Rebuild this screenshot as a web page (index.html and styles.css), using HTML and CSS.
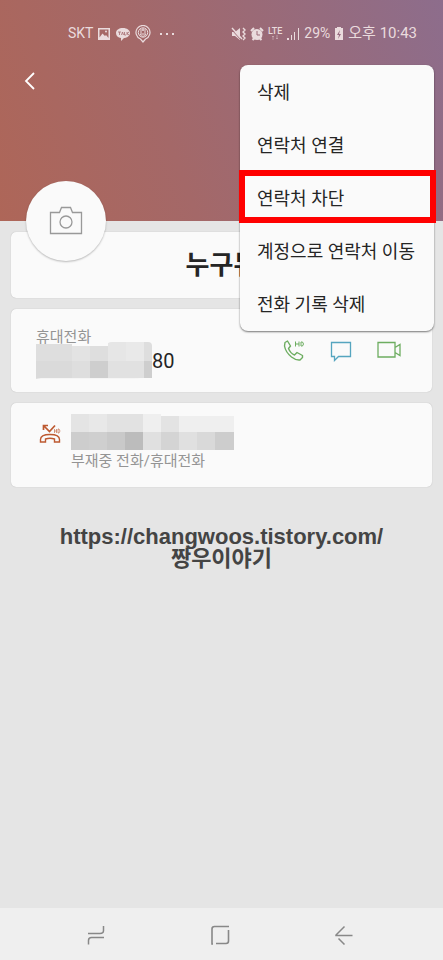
FILE: index.html
```html
<!DOCTYPE html>
<html lang="ko">
<head>
<meta charset="utf-8">
<meta name="viewport" content="width=device-width, initial-scale=1">
<title>연락처</title>
<link rel="stylesheet" href="styles.css">
</head>
<body>
<div class="screen">
  <header class="hero">
    <div class="status">
      <div class="status-group">
        <span class="small">SKT</span>
        <svg width="14" height="14" viewBox="0 0 14 14"><path fill="currentColor" fill-rule="evenodd" d="M1 1h12v12H1zM2.500 2.500v8l3-4 2.500 2.500 1-1 2.500 3V2.500z"/><circle cx="9" cy="4.600" r="1" fill="currentColor"/></svg>
        <svg width="16" height="14" viewBox="0 0 16 14"><path fill="currentColor" d="M8 1c4 0 7 2.200 7 5s-3 5-6 5l-3 3v-3C3 10.500 1 9 1 6s3-5 7-5z"/><path d="M3 5h3M4.500 5v3M6.500 8l1-3 1 3M9.500 5v3h1.500M12 5v3M14 5l-2 1.500 2 1.500" fill="none" stroke="#a46b70" stroke-width=".8"/></svg>
        <svg width="16" height="18" viewBox="0 0 16 18"><path fill="none" stroke="currentColor" stroke-width="1.200" d="M5.500 14a7 7 0 1 1 5 0L8 17z"/><circle cx="8" cy="7.500" r="4.700" fill="none" stroke="currentColor"/><path d="M5 5h6M5 7h2M9 7h2M5 9c1 3 5 3 6 0zM8 3v3" fill="none" stroke="currentColor"/></svg>
        <svg class="dots" width="16" height="14" viewBox="0 0 16 14"><path fill="currentColor" d="M1 6h2v2H1zM7 6h2v2H7zM13 6h2v2h-2z"/></svg>
      </div>
      <div class="status-group">
        <svg width="15" height="14" viewBox="0 0 15 14"><path fill="currentColor" d="M1 5h3l5-4v12L4 9H1z"/><path d="M1 3l9 10" stroke="#9f6a75"/><path d="M1 1l10 11M12 1l2 2-2 2 2 2-2 2 2 2-2 2" fill="none" stroke="currentColor" stroke-width="1.400"/></svg>
        <svg width="14" height="14" viewBox="0 0 14 14"><circle cx="7" cy="7.500" r="5.500" fill="currentColor"/><path d="M1 4l3-3M10 1l3 3M2.500 13l2-2M11.500 13l-2-2" stroke="currentColor" stroke-width="2"/><path d="M7 4v4h3" fill="none" stroke="#9c6a78"/></svg>
        <span class="lte">LTE<svg width="8" height="5" viewBox="0 0 8 5"><path d="M2 5V1M1 2l1-1 1 1M6 0v4M5 3l1 1 1-1" fill="none" stroke="currentColor" stroke-width=".7" opacity=".6"/></svg></span>
        <svg width="14" height="14" viewBox="0 0 14 14"><path d="M1 11h2v2H1zM5 8h1v5H5zM8 5h1v8H8zM12 1h1v12h-1z" fill="currentColor"/></svg>
        <span class="small">29%</span>
        <svg width="10" height="14" viewBox="0 0 10 14"><path fill="currentColor" d="M3 0h4v1h2v12H1V1h2z"/><path d="M6 3L3 8h2l-1 4 3-5H5z" fill="#96697f"/></svg>
        <span>오후 10:43</span>
      </div>
    </div>
    <button class="back" aria-label="뒤로"><svg width="12" height="18" viewBox="0 0 12 18"><path d="M10 1L2 9l8 8" fill="none" stroke="currentColor" stroke-width="1.800"/></svg></button>
    <button class="avatar" aria-label="사진 추가"><svg width="34" height="30" viewBox="0 0 34 30"><path d="M1.500 6.500h9l2-5h9l2 5h9v21h-31z" fill="none" stroke="currentColor" stroke-width="1.300"/><circle cx="17" cy="16" r="6" fill="none" stroke="currentColor" stroke-width="1.300"/></svg></button>
    <nav class="menu">
      <button>삭제</button>
      <button>연락처 연결</button>
      <button class="marked">연락처 차단</button>
      <button>계정으로 연락처 이동</button>
      <button>전화 기록 삭제</button>
    </nav>
  </header>
  <main class="content">
    <section class="card name-card"><h1>누구뉴</h1></section>
    <section class="card phone-card">
      <div>
        <div class="label">휴대전화</div>
        <div class="number">
          <svg width="116" height="37" viewBox="0 0 116 37"><path fill="#dedede" d="M0 2h36v35H0z"/><path fill="#e3e3e3" d="M36 4h18v33H36z"/><path fill="#dedede" d="M54 4h18v15H54z"/><path fill="#e6e6e6" d="M72 1q2-1 4-1h14v19H72z"/><path fill="#e9e9e9" d="M90 0h18v19H90z"/><path fill="#dedede" d="M108 0h4q4 0 4 4v15h-8z"/><path fill="#dadada" d="M0 19h36v17H0z"/><path fill="#dedede" d="M36 19h18v17H36z"/><path fill="#cecece" d="M54 19h18v17H54zM108 19h8v17h-8z"/><path fill="#e1e1e1" d="M72 19h36v17H72z"/><path fill="#f5f5f5" d="M0 36h108l-10 1H5z"/></svg><span>80</span>
        </div>
      </div>
      <div class="actions">
        <button class="green" aria-label="전화"><svg width="22" height="22" viewBox="0 0 22 22"><path d="M2 2.500l2.500-1.500 3 5-2 2.500q2 5 6 6.500l2.500-2.500 5.500 3v2l-2.500 2.500q-4 .5-8.500-3-6-5-7-11z" fill="none" stroke="currentColor" stroke-width="1.400" stroke-linejoin="round"/><path d="M12.500 1.500v5M16 1.500v5M12.500 4H16M18 2v4h1.500q2-2 0-4z" fill="none" stroke="currentColor"/></svg></button>
        <button class="blue" aria-label="메시지"><svg width="22" height="22" viewBox="0 0 22 22"><path d="M1.500 2.500h19v14h-12l-4 4v-4h-3z" fill="none" stroke="currentColor" stroke-width="1.300"/></svg></button>
        <button class="green" aria-label="영상통화"><svg width="25" height="20" viewBox="0 0 25 20"><path d="M1 2.500h17v14.500H1zM18 7.500l5-3v11l-5-3" fill="none" stroke="currentColor" stroke-width="1.300"/></svg></button>
      </div>
    </section>
    <section class="card history-card">
      <svg class="missed" width="22" height="20" viewBox="0 0 22 20"><path d="M1.500 15.500q0-5 9.500-5t9.500 5v2.500h-5v-3q-4.500-1.500-9 0v3h-5z" fill="none" stroke="currentColor" stroke-width="1.400"/><path d="M4.500 6V1.500H9M4.500 1.500l6 6 5.500-6" fill="none" stroke="currentColor" stroke-width="1.700"/><path d="M15.500 5v4M17.500 5v4M15.500 7h2M19 5v4h1q2-2 0-4z" fill="none" stroke="currentColor" stroke-width=".6"/></svg>
      <div>
        <svg width="163" height="37" viewBox="0 0 163 37"><path fill="#e4e4e4" d="M0 0h18v18H0z"/><path fill="#e8e8e8" d="M18 0h18v18H18z"/><path fill="#e2e2e2" d="M36 0h36v18H36z"/><path fill="#efefef" d="M72 0h18v18H72zM108 2h55v16h-55z"/><path fill="#e3e3e3" d="M90 2h18v16H90z"/><path fill="#cdcdcd" d="M0 18h18v18H0zM144 18h19v18h-19z"/><path fill="#cfcfcf" d="M18 18h18v18H18z"/><path fill="#c9c9c9" d="M36 18h18v18H36z"/><path fill="#bcbcbc" d="M54 18h18v18H54z"/><path fill="#e0e0e0" d="M72 18h18v18H72zM108 18h18v18h-18z"/><path fill="#d4d4d4" d="M90 18h18v18H90z"/><path fill="#d9d9d9" d="M126 18h18v18h-18z"/></svg>
        <div class="label">부재중 전화/휴대전화</div>
      </div>
    </section>
    <p class="credit"><a href="https://changwoos.tistory.com/">https://changwoos.tistory.com/</a><span>짱우이야기</span></p>
  </main>
  <footer class="nav">
    <button aria-label="최근 앱"><svg width="18" height="20" viewBox="0 0 18 20"><path d="M1 8.500h12q3.500 0 3.500-3V1M17 12.500H4.500q-3 0-3 3v4" fill="none" stroke="currentColor" stroke-width="1.500"/></svg></button>
    <button aria-label="홈"><svg width="20" height="20" viewBox="0 0 20 20"><path d="M3 19H2V4q0-2.500 2.500-2.500H19M18.500 5v11q0 2.500-2.500 2.500H6" fill="none" stroke="currentColor" stroke-width="1.600"/></svg></button>
    <button aria-label="뒤로 가기"><svg width="18" height="20" viewBox="0 0 18 20"><path d="M9.500 1.500L1 10v.500h16.500M3.500 13.500l6 6" fill="none" stroke="currentColor" stroke-width="1.500"/></svg></button>
  </footer>
</div>
</body>
</html>
```
FILE: styles.css
```css
* { box-sizing: border-box; }
body { margin: 0; background: #e5e5e5; color: #252525; font-family: Roboto, "Noto Sans CJK KR", sans-serif; }
button { border: 0; padding: 0; background: none; color: inherit; font: inherit; cursor: pointer; }
a { color: inherit; text-decoration: none; }
svg { display: block; flex: none; }
.screen { min-height: 100vh; display: flex; flex-direction: column; }
.hero { position: relative; height: 221px; padding: 20px 16px 0; background: linear-gradient(70deg, #ae6658 0%, #a46868 38%, #8d6d8c 100%); }
.status { display: flex; justify-content: space-between; height: 27px; padding: 0 10px 0 52px; font-size: 15px; line-height: 27px; color: #eadbdd; }
.status-group { display: flex; align-items: center; gap: 4px; }
.small { font-size: 14px; }
.dots { margin-left: 4px; }
.lte { font-size: 9px; line-height: 8px; font-weight: 500; }
.lte svg { margin: 0 auto; }
.back { display: grid; place-items: center; width: 28px; height: 28px; margin-top: 20px; color: #fff; }
.avatar { position: absolute; left: 26px; bottom: -40px; z-index: 1; width: 80px; height: 80px; display: grid; place-items: center; border-radius: 50%; background: #fafafa; color: #999; box-shadow: 0 1px 2px #0004; }
.menu { position: absolute; top: 65px; right: 9px; z-index: 2; width: 194px; padding-top: 1px; display: flex; flex-direction: column; border-radius: 8px; background: #fafafa; box-shadow: 0 1px 2px #0008; }
.menu button { height: 53px; padding: 0 17px; text-align: left; white-space: nowrap; font-size: 18px; line-height: 26px; }
.menu .marked { margin: -2px -2px 2px -1px; padding: 4px 12px 0; border: 6px solid #f00; }
.content { flex: 1; display: flex; flex-direction: column; gap: 11px; padding: 11px; }
.card { display: flex; border-radius: 5px; background: #fafafa; box-shadow: 0 0 1px #0004; }
.name-card { height: 66px; align-items: center; justify-content: center; }
h1 { margin: 0; font-size: 26px; line-height: 32px; font-weight: 700; }
.phone-card { justify-content: space-between; padding: 18px 30px 8px 25px; height: 83px; }
.label { font-size: 15px; line-height: 20px; color: #949494; }
.number { display: flex; align-items: flex-start; margin-top: -5px; font-size: 20px; line-height: 38px; }
.actions { display: flex; align-items: flex-start; gap: 25px; padding-top: 13px; }
.green { color: #6dad60; }
.blue { color: #55a5bf; }
.history-card { gap: 10px; height: 84px; padding: 11px 28px; }
.missed { margin-top: 10px; color: #bd5930; }
.credit { display: flex; flex-direction: column; align-items: center; margin: 28px 0 0; font-family: "Liberation Sans", "Noto Sans CJK KR", sans-serif; font-size: 22px; line-height: 22px; font-weight: 700; color: #444; }
.nav { display: flex; justify-content: center; align-items: center; gap: 105px; height: 52px; padding: 1px 4px 0 0; background: #efefef; color: #888; }
```
